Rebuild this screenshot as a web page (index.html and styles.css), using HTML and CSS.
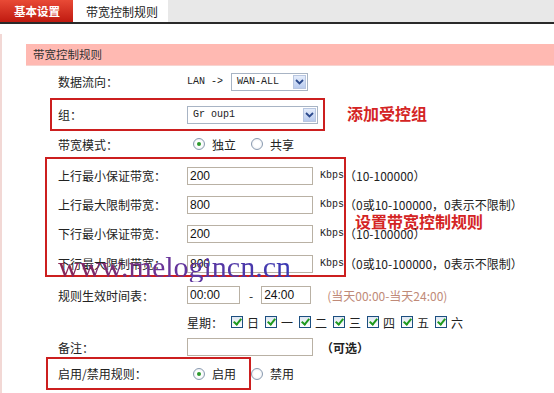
FILE: index.html
```html
<!DOCTYPE html>
<html lang="zh-CN">
<head>
    <meta charset="UTF-8">
    <title>带宽控制规则</title>
    <link rel="stylesheet" href="styles.css">
</head>
<body>
    <div class="tabs">
        <a href="#basic" class="tab active">基本设置</a>
        <a href="#rules" class="tab">带宽控制规则</a>
    </div>

    <div class="content">
        <div class="section-title">带宽控制规则</div>
        <div class="form">
            <div class="row row-first">
                <label>数据流向：</label>
                <div class="field">
                    <span class="mono">LAN -&gt;</span>
                    <div class="select select-wan">
                        <span class="mono">WAN-ALL</span>
                        <span class="arrow"><svg width="9" height="6" viewBox="0 0 9 6"><path d="M1 1 L4.5 4.5 L8 1" fill="none" stroke="#2c4a8c" stroke-width="1.8"/></svg></span>
                    </div>
                </div>
            </div>

            <div class="mark-line">
                <div class="mark mark-group">
                    <div class="row">
                        <label>组：</label>
                        <div class="field">
                            <div class="select select-group">
                                <span class="mono">Gr oup1</span>
                                <span class="arrow"><svg width="9" height="6" viewBox="0 0 9 6"><path d="M1 1 L4.5 4.5 L8 1" fill="none" stroke="#2c4a8c" stroke-width="1.8"/></svg></span>
                            </div>
                        </div>
                    </div>
                </div>
                <div class="note-red note-group">添加受控组</div>
            </div>

            <div class="row row-mode">
                <label>带宽模式：</label>
                <div class="field">
                    <span class="radio checked"></span><span class="opt">独立</span>
                    <span class="radio"></span><span class="opt">共享</span>
                </div>
            </div>

            <div class="mark-line">
                <div class="mark mark-rate">
                    <div class="row row-rate">
                        <label>上行最小保证带宽：</label>
                        <div class="field">
                            <input class="text" value="200">
                            <span class="unit">Kbps</span><span class="hint">（10-100000）</span>
                        </div>
                    </div>
                    <div class="row row-rate">
                        <label>上行最大限制带宽：</label>
                        <div class="field">
                            <input class="text" value="800">
                            <span class="unit">Kbps</span><span class="hint">（0或10-100000，0表示不限制）</span>
                        </div>
                    </div>
                    <div class="row row-rate">
                        <label>下行最小保证带宽：</label>
                        <div class="field">
                            <input class="text" value="200">
                            <span class="unit">Kbps</span><span class="hint">（10-100000）</span>
                        </div>
                    </div>
                    <div class="row row-rate row-last">
                        <label>下行最大限制带宽：</label>
                        <div class="field">
                            <input class="text" value="800">
                            <span class="unit">Kbps</span><span class="hint">（0或10-100000，0表示不限制）</span>
                        </div>
                    </div>
                    <div class="watermark">www.melogincn.cn</div>
                </div>
                <div class="note-red note-rate">设置带宽控制规则</div>
            </div>

            <div class="row row-time">
                <label>规则生效时间表：</label>
                <div class="field">
                    <input class="text time" value="00:00">
                    <span class="dash">-</span>
                    <input class="text time time-end" value="24:00">
                    <span class="time-hint">(当天00:00-当天24:00)</span>
                </div>
            </div>

            <div class="row row-week">
                <label></label>
                <div class="field">
                    <span class="week-label">星期：</span>
                    <span class="day"><span class="check"></span>日</span>
                    <span class="day"><span class="check"></span>一</span>
                    <span class="day"><span class="check"></span>二</span>
                    <span class="day"><span class="check"></span>三</span>
                    <span class="day"><span class="check"></span>四</span>
                    <span class="day"><span class="check"></span>五</span>
                    <span class="day"><span class="check"></span>六</span>
                </div>
            </div>

            <div class="row row-memo">
                <label>备注：</label>
                <div class="field">
                    <input class="text" value="">
                    <span class="optional">（可选）</span>
                </div>
            </div>

            <div class="mark mark-enable">
                <div class="row">
                    <label>启用/禁用规则：</label>
                    <div class="field">
                        <span class="radio checked"></span><span class="opt">启用</span>
                        <span class="radio"></span><span class="opt">禁用</span>
                    </div>
                </div>
            </div>
        </div>
    </div>
</body>
</html>
```

FILE: styles.css
```css
body {
    margin: 0;
    padding: 0;
    width: 554px;
    height: 393px;
    overflow: hidden;
    background: #fff;
    font-family: "Noto Sans CJK SC", "Noto Sans", sans-serif;
    font-size: 12px;
    color: #222;
}
.tabs {
    display: flex;
    height: 22px;
    background: #e8e8e8;
    border-bottom: 2px solid #2a2a2a;
}
.tab {
    display: flex;
    align-items: center;
    text-decoration: none;
    color: #222;
    font-size: 12px;
    padding: 0 10px 0 13px;
    background: #fff;
}
.tab.active {
    background: linear-gradient(#e84a36, #c01a10);
    color: #fff;
    font-weight: bold;
    font-size: 11.5px;
    padding: 0 13px 0 14px;
}
.content {
    position: relative;
    border-left: 2px solid #f2d8d5;
    margin-top: 10px;
    padding-top: 10px;
    height: 360px;
}
.section-title {
    margin-left: 24px;
    height: 21px;
    line-height: 21px;
    background: #ffb9b2;
    border-bottom: 1px solid #f7d4d0;
    padding-left: 7px;
    font-size: 11.5px;
    color: #333;
}
.form {
    padding-left: 56px;
    padding-top: 2px;
}
.row {
    display: flex;
    align-items: center;
    height: 28px;
    white-space: nowrap;
}
.row label {
    width: 129px;
    flex: none;
}
.field {
    display: flex;
    align-items: center;
    flex: none;
    white-space: nowrap;
}
.row-first {
    height: 27px;
}
.mono {
    font-family: "Liberation Mono", monospace;
    font-size: 10px;
    color: #222;
}
.select {
    display: flex;
    align-items: center;
    justify-content: space-between;
    height: 16px;
    border: 1px solid #a8b4c4;
    padding-left: 5px;
    background: #fff;
}
.select-wan {
    width: 70px;
    margin-left: 8px;
}
.select-group {
    width: 124px;
}
.arrow {
    display: flex;
    align-items: center;
    justify-content: center;
    width: 13px;
    height: 14px;
    margin-right: 1px;
    background: linear-gradient(#e4ecfb, #b9cbee);
    border: 1px solid #b8c6e0;
    box-sizing: border-box;
}
.mark-line {
    display: flex;
    align-items: center;
}
.mark {
    border: 2px solid #cc1f1f;
    position: relative;
}
.mark-group {
    margin-left: -8px;
    padding-left: 6px;
    width: 265px;
    margin-top: 3px;
}
.mark-group .row {
    height: 29px;
}
.note-red {
    color: #d42424;
    font-weight: bold;
    font-size: 16px;
    white-space: nowrap;
}
.note-group {
    margin-left: 22px;
}
.row-mode {
    height: 26px;
}
.radio {
    flex: none;
    width: 10px;
    height: 10px;
    border: 1px solid #8a9bb0;
    border-radius: 50%;
    background: radial-gradient(circle, #fff 40%, #e2e6ec 100%);
    margin-left: 6px;
    margin-right: 7px;
    display: flex;
    align-items: center;
    justify-content: center;
}
.radio.checked::after {
    content: "";
    width: 4px;
    height: 4px;
    border-radius: 50%;
    background: #2e9a2e;
}
.opt {
    margin-right: 9px;
}
.mark-rate {
    box-sizing: border-box;
    margin-left: -13px;
    padding-left: 11px;
    width: 301px;
    height: 120px;
    padding-top: 2px;
}
.row-rate {
    height: 29px;
}
.row-rate.row-last {
    height: 31px;
}
.text {
    box-sizing: border-box;
    width: 126px;
    height: 18px;
    border: 1px solid #b9b1a4;
    padding: 0 2px;
    font-family: "Liberation Sans", sans-serif;
    font-size: 12px;
    color: #111;
    margin: 0;
}
.unit {
    font-family: "Liberation Mono", monospace;
    font-size: 10px;
    margin-left: 7px;
}
.watermark {
    position: absolute;
    left: 11px;
    top: 93px;
    font-family: "Liberation Serif", serif;
    font-size: 30px;
    line-height: 30px;
    white-space: nowrap;
    background: linear-gradient(90deg, #8a2450, #6a3498 45%, #3a3ab4);
    -webkit-background-clip: text;
    background-clip: text;
    color: transparent;
}
.note-rate {
    margin-left: 9px;
    margin-top: 8px;
}
.row-time {
    margin-top: 4px;
}
.time {
    width: 53px;
}
.time-end {
    width: 50px;
}
.dash {
    margin: 0 8px 0 9px;
}
.time-hint {
    color: #c08a78;
    margin-left: 16px;
}
.row-week {
    height: 26px;
}
.week-label {
    margin-right: 8px;
}
.day {
    display: flex;
    align-items: center;
    margin-right: 6px;
}
.check {
    width: 10px;
    height: 10px;
    border: 1px solid #1c4f80;
    background: linear-gradient(#dfe7f1, #fff);
    margin-right: 4px;
    position: relative;
}
.check::after {
    content: "";
    position: absolute;
    left: 3px;
    top: 0;
    width: 3px;
    height: 6px;
    border: solid #1f9a1f;
    border-width: 0 2px 2px 0;
    transform: rotate(40deg);
}
.row-memo {
    height: 24px;
}
.optional {
    margin-left: 8px;
    font-weight: bold;
}
.mark-enable {
    margin-left: -12px;
    padding-left: 10px;
    width: 191px;
    margin-top: -2px;
}
.mark-enable .row {
    height: 29px;
}
```
